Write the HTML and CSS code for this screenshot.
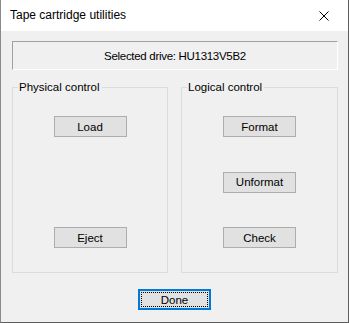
FILE: index.html
```html
<!DOCTYPE html>
<html lang="en">
<head>
  <meta charset="UTF-8" />
  <title>Tape cartridge utilities</title>
  <link rel="stylesheet" href="styles.css">
</head>
<body>
  <div class="window">
    <div class="titlebar">
      <span class="title">Tape cartridge utilities</span>
      <button class="close-btn" title="Close">
        <svg width="10" height="10" viewBox="0 0 10 10">
          <path d="M0.5 0.5 L9.5 9.5 M9.5 0.5 L0.5 9.5" stroke="#000" stroke-width="1" fill="none" />
        </svg>
      </button>
    </div>

    <div class="client">
      <div class="drive-box">Selected drive: HU1313V5B2</div>

      <div class="groups">
        <fieldset class="group group-left">
          <legend>Physical control</legend>
          <button class="btn">Load</button>
          <button class="btn">Eject</button>
        </fieldset>
        <fieldset class="group group-right">
          <legend>Logical control</legend>
          <button class="btn">Format</button>
          <button class="btn">Unformat</button>
          <button class="btn">Check</button>
        </fieldset>
      </div>

      <div class="footer">
        <button class="btn btn-default">Done</button>
      </div>
    </div>
  </div>
</body>
</html>
```

FILE: styles.css
```css
body {
  margin: 0;
  font-family: 'Liberation Sans', Arial, sans-serif;
  font-size: 11.5px;
  color: #000;
  background: #f0f0f0;
}
.window {
  width: 347px;
  height: 322px;
  border-left: 1px solid #8a8a8a;
  border-right: 1px solid #5e5e5e;
  border-bottom: 1px solid #5e5e5e;
  display: flex;
  flex-direction: column;
  background: #f0f0f0;
}
.titlebar {
  height: 31px;
  background: white;
  display: flex;
  align-items: center;
  justify-content: space-between;
  padding-left: 9px;
}
.title {
  font-size: 12px;
  margin-top: -1px;
}
.close-btn {
  width: 46px;
  height: 31px;
  border: none;
  background: none;
  padding: 0;
  display: flex;
  align-items: center;
  justify-content: center;
  margin-right: 1px;
}
.client {
  flex: 1;
  padding: 10px 10px 12px 11px;
  display: flex;
  flex-direction: column;
}
.drive-box {
  height: 27px;
  border-top: 1px solid #a0a0a0;
  border-left: 1px solid #a0a0a0;
  border-right: 1px solid #ffffff;
  border-bottom: 1px solid #ffffff;
  display: flex;
  align-items: center;
  justify-content: center;
  letter-spacing: -0.3px;
}
.groups {
  display: flex;
  gap: 13px;
  margin-top: 11px;
}
.group {
  margin: 0;
  border: 1px solid #dcdcdc;
  padding: 23px 0 24px;
  display: flex;
  flex-direction: column;
  align-items: center;
  justify-content: space-between;
  height: 192px;
  box-sizing: border-box;
  min-width: 0;
}
.group-left {
  width: 156px;
}
.group-right {
  width: 157px;
}
.group legend {
  padding: 0 2px 0 1px;
  margin-left: 5px;
  line-height: 12px;
}
.btn {
  width: 73px;
  height: 21px;
  font-family: 'Liberation Sans', Arial, sans-serif;
  font-size: 11.5px;
  color: #000;
  background: #e1e1e1;
  border: 1px solid #adadad;
  padding: 0;
  line-height: 18px;
}
.footer {
  display: flex;
  justify-content: center;
  margin-top: 16px;
  padding-right: 1px;
}
.btn-default {
  border: 2px solid #0078d7;
  outline: 1px dotted #000;
  outline-offset: -4px;
}
```
